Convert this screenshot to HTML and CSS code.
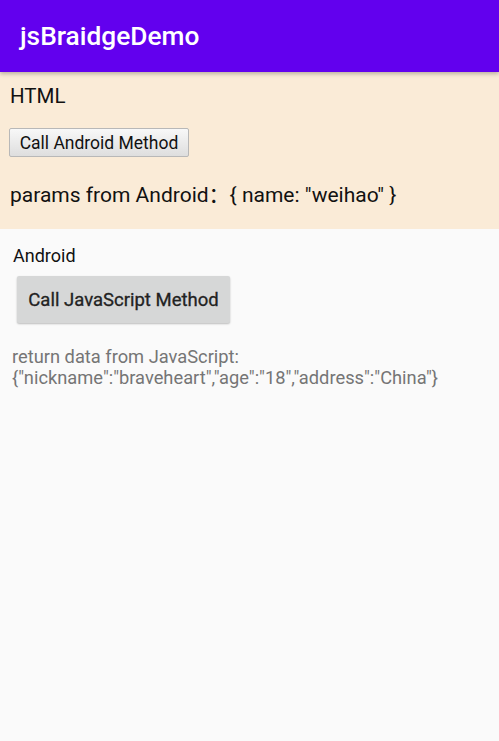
FILE: index.html
```html
<!DOCTYPE html>
<html>
<head>
<meta charset="utf-8">
<link rel="stylesheet" href="styles.css">
</head>
<body>
<header class="appbar"><span class="title">jsBraidgeDemo</span></header>
<section class="web">
  <div class="web-title">HTML</div>
  <button class="web-btn">Call Android Method</button>
  <div class="params">params from Android<span class="cjk">：</span>{ name: "weihao" }</div>
</section>
<section class="native">
  <div class="native-title">Android</div>
  <button class="native-btn">Call JavaScript Method</button>
  <div class="result">return data from JavaScript:<br>{"nickname":"braveheart","age":"18","address":"China"}</div>
</section>
</body>
</html>
```
FILE: styles.css
```css
html, body { margin: 0; padding: 0; }
body {
  width: 499px;
  height: 741px;
  background: #fafafa;
  font-family: Roboto, "Noto Sans", sans-serif;
  overflow: hidden;
}
.appbar {
  height: 72px;
  background: #6200ee;
  display: flex;
  align-items: center;
  padding-left: 20px;
  box-shadow: 0 2px 4px rgba(0,0,0,0.25);
  position: relative;
  z-index: 1;
}
.title {
  color: #fff;
  font-size: 26.3px;
  font-weight: 500;
}
.web {
  height: 157px;
  background: #faebd7;
  padding: 12px 10px 0 10px;
  box-sizing: border-box;
}
.web-title {
  font-size: 20.5px;
  line-height: 24px;
  color: #111;
}
.web-btn {
  margin-top: 20px;
  width: 180px;
  height: 29px;
  font-family: Roboto, sans-serif;
  font-size: 17.5px;
  color: #111;
  padding: 0;
  border: 1px solid #b8b8b8;
  border-radius: 2px;
  background: linear-gradient(#f8f8f8, #dedede);
  display: block;
  margin-left: -1px;
}
.params {
  margin-top: 24px;
  font-size: 21px;
  line-height: 24px;
  color: #111;
}
.cjk {
  font-family: "Noto Sans CJK SC", sans-serif;
}
.native {
  padding: 16px 12px 0 13px;
}
.native-title {
  font-size: 18px;
  line-height: 22px;
  color: #111;
}
.native-btn {
  margin: 9px 0 0 4px;
  width: 213px;
  height: 47px;
  background: #d6d7d7;
  border: none;
  border-radius: 2px;
  box-shadow: 0 1px 2px rgba(0,0,0,0.25);
  font-family: Roboto, sans-serif;
  font-weight: 400;
  font-size: 18.5px;
  -webkit-text-stroke: 0.3px #222;
  color: #222;
  padding: 0;
  display: block;
}
.result {
  margin: 23px 0 0 -1px;
  font-size: 18.3px;
  line-height: 21px;
  color: #757575;
}
```
